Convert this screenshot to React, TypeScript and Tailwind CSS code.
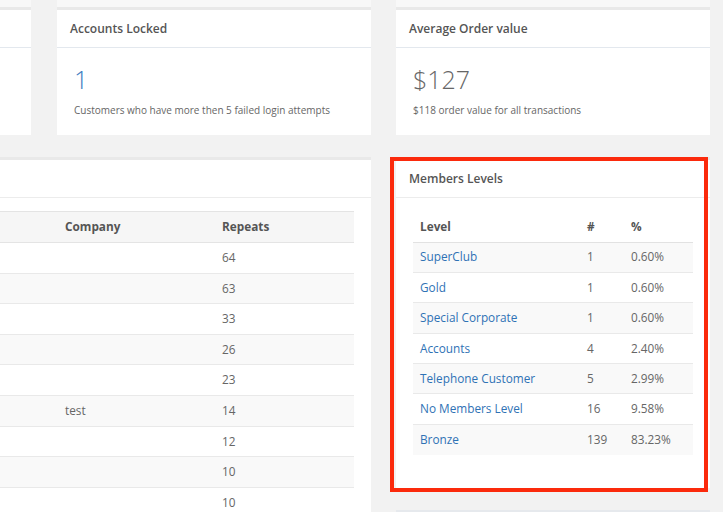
const repeats: { company: string; repeats: number }[] = [
  { company: '', repeats: 64 },
  { company: '', repeats: 63 },
  { company: '', repeats: 33 },
  { company: '', repeats: 26 },
  { company: '', repeats: 23 },
  { company: 'test', repeats: 14 },
  { company: '', repeats: 12 },
  { company: '', repeats: 10 },
  { company: '', repeats: 10 },
]

const levels: { name: string; count: number; pct: string }[] = [
  { name: 'SuperClub', count: 1, pct: '0.60%' },
  { name: 'Gold', count: 1, pct: '0.60%' },
  { name: 'Special Corporate', count: 1, pct: '0.60%' },
  { name: 'Accounts', count: 4, pct: '2.40%' },
  { name: 'Telephone Customer', count: 5, pct: '2.99%' },
  { name: 'No Members Level', count: 16, pct: '9.58%' },
  { name: 'Bronze', count: 139, pct: '83.23%' },
]

function StatCard({
  title,
  value,
  note,
  valueClass,
}: {
  title: string
  value: string
  note: string
  valueClass: string
}) {
  return (
    <div className="border-t-[3px] border-[#e9e9e9] bg-white">
      <div className="flex h-[38px] items-center border-b border-[#e3e8ee] px-[13px] text-[12px] font-semibold text-[#555]">
        {title}
      </div>
      <div className="px-[17px] pt-[16px] pb-[17px]">
        <div className={`h-[30px] text-[25px] leading-[30px] font-light ${valueClass}`}>{value}</div>
        <div className="mt-[8px] h-[16px] text-[10px] leading-[16px] text-[#666]">{note}</div>
      </div>
    </div>
  )
}

export default function App() {
  return (
    <div
      className="h-[512px] w-[723px] overflow-hidden bg-[#f2f2f2]"
      style={{ fontFamily: '"Open Sans", "Noto Sans", sans-serif' }}
    >
      {/* top row */}
      <div className="flex">
        <div className="w-[31px] bg-[#f8f8f8] pt-[7px]">
          <div className="h-[128px] border-t-[3px] border-[#e9e9e9] bg-white">
            <div className="h-[38px] border-b border-[#e3e8ee]" />
          </div>
        </div>
        <div className="ml-[26px] w-[314px] bg-[#f8f8f8] pt-[7px]">
          <StatCard
            title="Accounts Locked"
            value="1"
            note="Customers who have more then 5 failed login attempts"
            valueClass="text-[#3a7cc0]"
          />
        </div>
        <div className="ml-[25px] w-[314px] bg-[#f8f8f8] pt-[7px]">
          <StatCard
            title="Average Order value"
            value="$127"
            note="$118 order value for all transactions"
            valueClass="text-[#666]"
          />
        </div>
      </div>

      {/* second row */}
      <div className="mt-[22px] flex items-start">
        <div className="h-[400px] w-[371px] border-t-[3px] border-[#e9e9e9] bg-white">
          <div className="h-[38px] border-b border-[#ececec]" />
          <div className="pt-[13px] pr-[17px]">
            <table className="w-full border-collapse text-[11.8px] text-[#666]">
              <thead>
                <tr className="h-[31px] border-t border-b border-[#e4e4e4] bg-[#f6f6f6] text-left font-bold text-[#555]">
                  <th className="w-[58px]" />
                  <th className="w-[157px] pl-[7px]">Company</th>
                  <th className="pl-[7px]">Repeats</th>
                </tr>
              </thead>
              <tbody>
                {repeats.map((r, i) => (
                  <tr
                    key={i}
                    className={`h-[30.6px] border-b border-[#e9e9e9] ${i % 2 === 1 ? 'bg-[#f9f9f9]' : 'bg-white'}`}
                  >
                    <td />
                    <td className="pl-[7px]">{r.company}</td>
                    <td className="pl-[7px]">{r.repeats}</td>
                  </tr>
                ))}
              </tbody>
            </table>
          </div>
        </div>

        <div className="ml-[25px] w-[314px]">
          <div className="relative">
            <div className="h-[331px] border-t-[3px] border-[#e9e9e9] bg-white">
              <div className="flex h-[38px] items-center border-b border-[#ececec] px-[13px] text-[12px] font-semibold text-[#555]">
                Members Levels
              </div>
              <div className="px-[17px] pt-[14px]">
                <table className="w-full border-collapse text-[11.8px] text-[#666]">
                  <thead>
                    <tr className="h-[30px] border-b border-[#e2e2e2] text-left font-bold text-[#555]">
                      <th className="w-[167px] pl-[7px]">Level</th>
                      <th className="w-[44px] pl-[7px]">#</th>
                      <th className="pl-[7px]">%</th>
                    </tr>
                  </thead>
                  <tbody>
                    {levels.map((l, i) => (
                      <tr
                        key={l.name}
                        className={`h-[30.4px] ${i < levels.length - 1 ? 'border-b border-[#e9e9e9]' : ''} ${i % 2 === 0 ? 'bg-[#f9f9f9]' : 'bg-white'}`}
                      >
                        <td className="pl-[7px] text-[#2f72b5]">{l.name}</td>
                        <td className="pl-[7px]">{l.count}</td>
                        <td className="pl-[7px]">{l.pct}</td>
                      </tr>
                    ))}
                  </tbody>
                </table>
              </div>
            </div>
            {/* highlight annotation */}
            <div className="pointer-events-none absolute top-0 left-[-6px] h-[335px] w-[318px] border-4 border-[#fb2a0c]" />
          </div>
          <div className="mt-[22px] h-[20px] border-t-[3px] border-[#e6e9ed] bg-white" />
        </div>
      </div>
    </div>
  )
}
